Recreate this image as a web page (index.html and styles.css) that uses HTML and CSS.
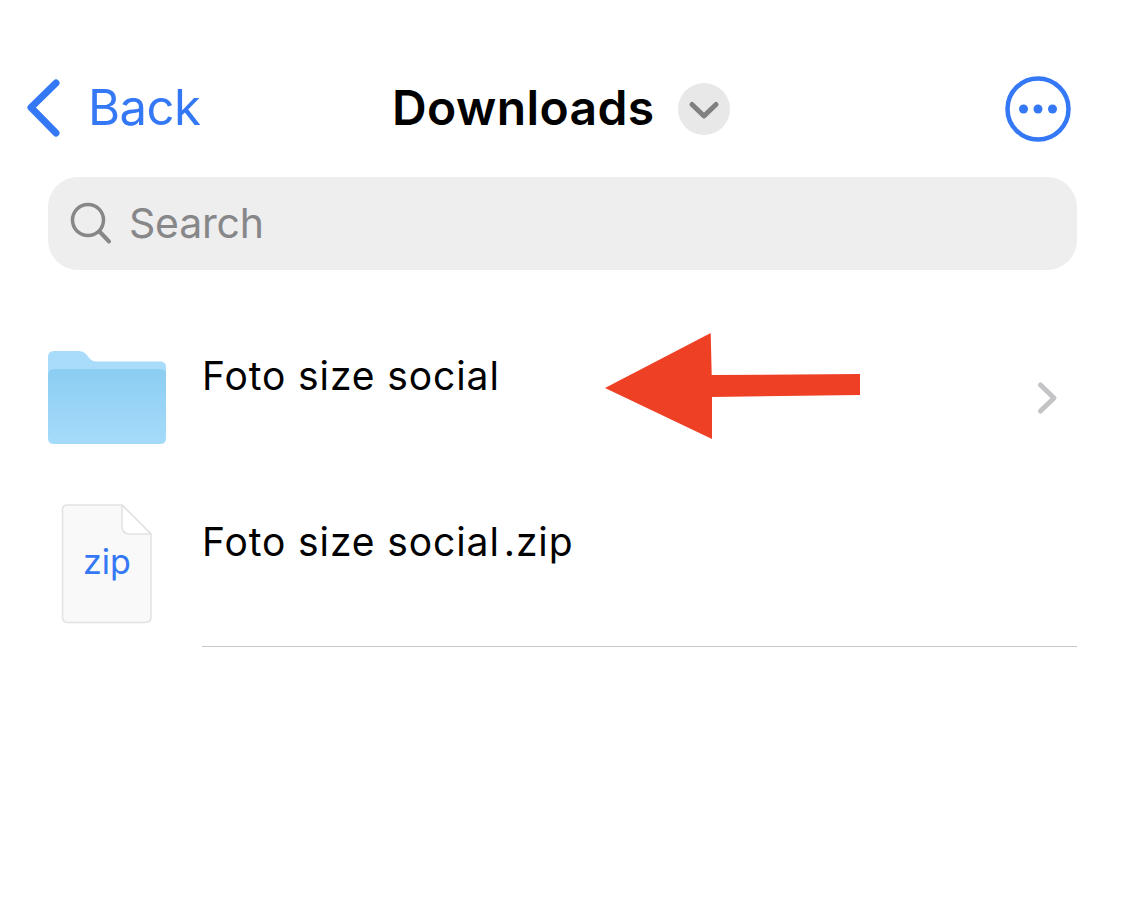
FILE: index.html
```html
<!DOCTYPE html>
<html lang="en">
<head>
    <meta charset="UTF-8">
    <title>Downloads</title>
    <link rel="stylesheet" href="styles.css">
</head>
<body>
<div class="page">
    <div class="nav">
        <div class="back">
            <svg class="back-icon" width="38" height="60" viewBox="0 0 38 60">
                <path d="M30 4 L5 28.500 L30 54" fill="none" stroke="#3478f6" stroke-width="7" stroke-linecap="round" stroke-linejoin="round"/>
            </svg>
            <span class="back-text">Back</span>
        </div>
        <h1 class="title">Downloads</h1>
        <svg class="title-toggle" width="52" height="52" viewBox="0 0 52 52">
            <circle cx="26" cy="26" r="26" fill="#e8e8e8"/>
            <path d="M14 21.500 L26 33 L38 21.500" fill="none" stroke="#808080" stroke-width="5" stroke-linecap="round" stroke-linejoin="round"/>
        </svg>
        <svg class="more" width="66" height="66" viewBox="0 0 66 66">
            <circle cx="33" cy="33" r="30.500" fill="none" stroke="#3478f6" stroke-width="4.500"/>
            <circle cx="18.500" cy="33" r="4.500" fill="#3478f6"/>
            <circle cx="33" cy="33" r="4.500" fill="#3478f6"/>
            <circle cx="47.500" cy="33" r="4.500" fill="#3478f6"/>
        </svg>
    </div>

    <div class="search">
        <svg width="44" height="44" viewBox="0 0 44 44">
            <circle cx="18" cy="18" r="15.500" fill="none" stroke="#87878a" stroke-width="3.500"/>
            <path d="M29.500 29.500 L39 39.500" fill="none" stroke="#87878a" stroke-width="4" stroke-linecap="round"/>
        </svg>
        <span class="search-text">Search</span>
    </div>

    <ul class="files">
        <li class="row">
            <div class="row-icon">
                <svg class="folder" width="118" height="93" viewBox="0 0 118 93">
                    <defs>
                        <linearGradient id="folderFront" x1="0" y1="0" x2="0" y2="1">
                            <stop offset="0" stop-color="#8ccdf2"/>
                            <stop offset="1" stop-color="#a5dbfa"/>
                        </linearGradient>
                    </defs>
                    <path d="M0 6 Q0 0 6 0 L31 0 Q35 0 38 3 L42 8 Q45 10.500 48 10.500 L112 10.500 Q118 10.500 118 16 L118 40 L0 40 Z" fill="#a9dcfb"/>
                    <path d="M0 24 Q0 18 6 18 L112 18 Q118 18 118 24 L118 87 Q118 93 112 93 L6 93 Q0 93 0 87 Z" fill="url(#folderFront)"/>
                </svg>
            </div>
            <div class="row-body">
                <span class="row-name">Foto size social</span>
                <svg class="row-arrow" width="24" height="34" viewBox="0 0 24 34">
                    <path d="M5.500 4 L19 17 L5.500 30" fill="none" stroke="#c4c4c6" stroke-width="5" stroke-linecap="round" stroke-linejoin="round"/>
                </svg>
            </div>
        </li>
        <li class="row">
            <div class="row-icon">
                <div class="doc">
                    <svg width="92" height="120" viewBox="0 0 92 120">
                        <path d="M6 1 L61 1 L90 30 L90 113 Q90 118.500 84 118.500 L7 118.500 Q1.500 118.500 1.500 113 L1.500 6 Q1.500 1 6 1 Z" fill="#f9f9f9" stroke="#e2e2e2" stroke-width="1.500"/>
                        <path d="M61 1 L61 22 Q61 30 69 30 L90 30 Z" fill="#fff" stroke="#e2e2e2" stroke-width="1.500" stroke-linejoin="round"/>
                    </svg>
                    <span class="doc-label">zip</span>
                </div>
            </div>
            <div class="row-body row-last">
                <span class="row-name">Foto size social<span class="row-ext">.zip</span></span>
            </div>
        </li>
    </ul>

    <svg class="marker" width="256" height="108" viewBox="0 0 256 108">
        <path d="M0 55 L105.700 0 L106.700 42 L255 41 L255 62 L107 64 L107 106 Z" fill="#ee4025"/>
    </svg>
</div>
</body>
</html>
```

FILE: styles.css
```css
html,body,ul,h1{
    padding:0;
    margin:0;
}
body{
    background:#fff;
    font-family:"Inter","Liberation Sans",sans-serif;
    color:#000;
    overflow:hidden;
}
.page{
    position:relative;
    width:1125px;
    height:909px;
    padding-top:76px;
    box-sizing:border-box;
}
.nav{
    display:flex;
    align-items:center;
    height:65px;
    padding:0 54px 0 26px;
}
.back{
    display:flex;
    align-items:center;
    width:366px;
}
.back-icon{
    margin-right:24px;
}
.back-text{
    font-size:49px;
    line-height:60px;
    color:#3478f6;
    letter-spacing:-.55px;
    margin-bottom:2px;
}
.title{
    font-size:48px;
    line-height:60px;
    font-weight:600;
    letter-spacing:.4px;
    margin-bottom:2px;
}
.title-toggle{
    margin-left:23px;
}
.more{
    margin-left:auto;
}
.search{
    display:flex;
    align-items:center;
    height:93px;
    margin:36px 48px 0;
    padding-left:22px;
    background:#eee;
    border-radius:30px;
}
.search-text{
    margin-left:15px;
    margin-bottom:2px;
    font-size:41px;
    color:#87878a;
    letter-spacing:-.2px;
}
.files{
    list-style-type:none;
    margin:45px 48px 0;
}
.row{
    display:flex;
    height:166px;
}
.row-icon{
    display:flex;
    align-items:center;
    justify-content:center;
    width:118px;
    margin-right:36px;
}
.folder{
    margin-bottom:1px;
}
.row-body{
    flex:1;
    display:flex;
    justify-content:space-between;
    align-items:center;
    padding-right:18px;
}
.row-last{
    border-bottom:1px solid #c8c8c8;
}
.row-name{
    align-self:flex-start;
    margin-top:38px;
    font-size:39px;
    line-height:46px;
    letter-spacing:.9px;
}
.row-ext{
    margin-left:4px;
}
.doc{
    display:grid;
    place-items:center;
}
.doc svg,.doc-label{
    grid-area:1/1;
}
.doc-label{
    font-size:34px;
    color:#3478f6;
    margin-bottom:5px;
}
.marker{
    position:absolute;
    left:605px;
    top:333px;
}
```
